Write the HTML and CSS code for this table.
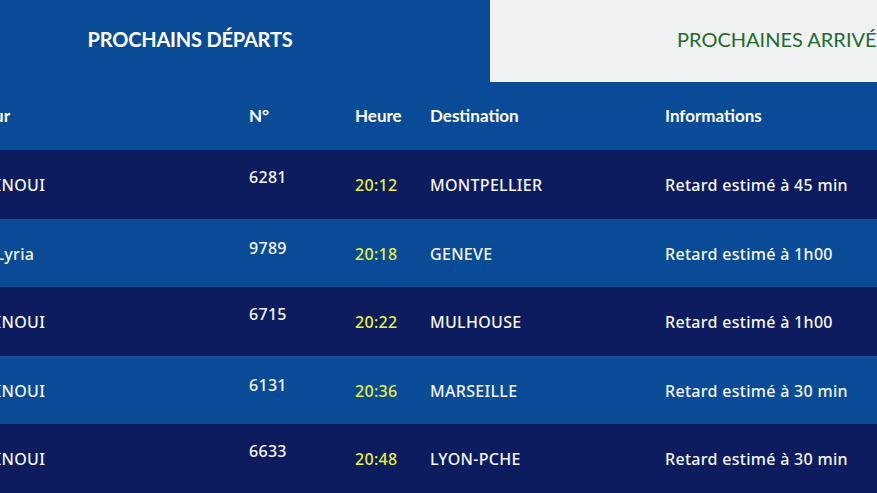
FILE: index.html
```html
<!DOCTYPE html>
<html lang="fr">
<head>
<meta charset="utf-8">
<link rel="stylesheet" href="styles.css">
</head>
<body>
<div class="board">
  <div class="tabs">
    <div class="tab tab-active">PROCHAINS DÉPARTS</div>
    <div class="tab tab-idle">PROCHAINES ARRIVÉES</div>
  </div>
  <div class="row row-head">
    <div class="c c1"><span class="head-first">Transporteur</span></div>
    <div class="c c2">N°</div>
    <div class="c c3">Heure</div>
    <div class="c c4">Destination</div>
    <div class="c c5">Informations</div>
  </div>
  <div class="row row-dark r-a">
    <div class="c c1">TGV INOUI</div>
    <div class="c c2 num">6281</div>
    <div class="c c3 time">20:12</div>
    <div class="c c4">MONTPELLIER</div>
    <div class="c c5">Retard estimé à 45 min</div>
  </div>
  <div class="row row-light r-b">
    <div class="c c1">TGV Lyria</div>
    <div class="c c2 num">9789</div>
    <div class="c c3 time">20:18</div>
    <div class="c c4">GENEVE</div>
    <div class="c c5">Retard estimé à 1h00</div>
  </div>
  <div class="row row-dark r-a">
    <div class="c c1">TGV INOUI</div>
    <div class="c c2 num">6715</div>
    <div class="c c3 time">20:22</div>
    <div class="c c4">MULHOUSE</div>
    <div class="c c5">Retard estimé à 1h00</div>
  </div>
  <div class="row row-light r-b">
    <div class="c c1">TGV INOUI</div>
    <div class="c c2 num">6131</div>
    <div class="c c3 time">20:36</div>
    <div class="c c4">MARSEILLE</div>
    <div class="c c5">Retard estimé à 30 min</div>
  </div>
  <div class="row row-dark r-a">
    <div class="c c1">TGV INOUI</div>
    <div class="c c2 num">6633</div>
    <div class="c c3 time">20:48</div>
    <div class="c c4">LYON-PCHE</div>
    <div class="c c5">Retard estimé à 30 min</div>
  </div>
</div>
</body>
</html>
```

FILE: styles.css
```css
html, body {
  margin: 0;
  padding: 0;
  overflow: hidden;
  background: #0a4b97;
}
.board {
  margin-left: -110px;
  width: 1200px;
  font-family: "Noto Sans", "Open Sans", sans-serif;
  color: #f4f5fa;
}
.tabs {
  display: flex;
  height: 82px;
}
.tab {
  width: 600px;
  display: flex;
  align-items: center;
  justify-content: center;
  font-family: Lato, "Noto Sans", sans-serif;
  font-weight: 700;
  font-size: 20px;
  letter-spacing: -0.2px;
  padding-bottom: 5px;
  box-sizing: border-box;
}
.tab-active {
  background: #0a4b97;
  color: #ffffff;
}
.tab-idle {
  background: #eff1f3;
  color: #1f6b2e;
  font-weight: 400;
  padding-right: 4px;
  letter-spacing: 0;
}
.row {
  display: grid;
  grid-template-columns: 289px 106px 75px 235px 1fr;
  padding-left: 70px;
  align-items: center;
  font-size: 16px;
  font-weight: 500;
  letter-spacing: 0.3px;
}
.row-head {
  height: 68px;
  background: #0a4b97;
  font-family: Lato, "Noto Sans", sans-serif;
  font-weight: 700;
  font-size: 17px;
  letter-spacing: 0;
  color: #ffffff;
  padding-bottom: 2px;
  box-sizing: border-box;
}
.r-a { height: 69px; }
.r-b { height: 68px; }
.row-dark { background: #0c1c5e; }
.row-light {
  background: #0a4b97;
  border-top: 2px solid #184f92;
  box-sizing: border-box;
}
.c { white-space: nowrap; }
.head-first {
  display: flex;
  justify-content: flex-end;
  width: 50px;
}
.num {
  align-self: start;
  padding-top: 16px;
}
.time { color: #e6f03c; }
```
